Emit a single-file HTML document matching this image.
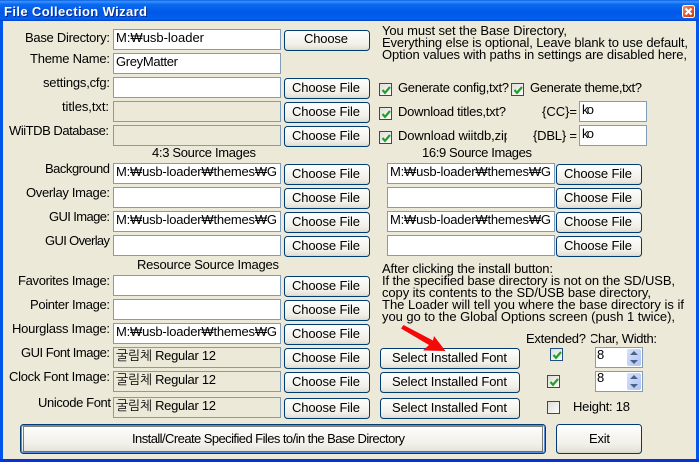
<!DOCTYPE html>
<html><head><meta charset="utf-8"><title>File Collection Wizard</title>
<style>
html,body{margin:0;padding:0;width:699px;height:462px;overflow:hidden;background:#ECE9D8}
svg{display:block}
text{font-family:"Liberation Sans","NanumGothic","Noto Sans CJK KR",sans-serif;font-size:13px;fill:#000;white-space:pre}
.i{fill:#fff;stroke:#7F9DB9}
.d{fill:#ECE9D8;stroke:#7F9DB9}
.c{fill:url(#cb);stroke:#1C5180}
.k{fill:none;stroke:#21A121;stroke-width:2.2}
.a{fill:#4D6185}
</style></head><body>
<svg width="699" height="462" viewBox="0 0 699 462" xmlns="http://www.w3.org/2000/svg">
<defs>
<linearGradient id="tb" x1="0" y1="0" x2="0" y2="1">
<stop offset="0" stop-color="#0A5FE0"/><stop offset=".08" stop-color="#3A93FF"/><stop offset=".2" stop-color="#0A6AF0"/><stop offset=".6" stop-color="#0058E8"/><stop offset=".9" stop-color="#0560EE"/><stop offset="1" stop-color="#0040C8"/>
</linearGradient>
<linearGradient id="bt" x1="0" y1="0" x2="0" y2="1">
<stop offset="0" stop-color="#FFFFFF"/><stop offset=".7" stop-color="#F0EFE8"/><stop offset=".9" stop-color="#E6E3D8"/><stop offset="1" stop-color="#D6D0C5"/>
</linearGradient>
<linearGradient id="cb" x1="0" y1="0" x2="1" y2="1">
<stop offset="0" stop-color="#DCDCD7"/><stop offset="1" stop-color="#FFFFFF"/>
</linearGradient>
<linearGradient id="sp" x1="0" y1="0" x2="1" y2="1">
<stop offset="0" stop-color="#D5E0FB"/><stop offset="1" stop-color="#AFC4F5"/>
</linearGradient>
<linearGradient id="cl" x1="0" y1="0" x2="1" y2="1">
<stop offset="0" stop-color="#F0A080"/><stop offset=".5" stop-color="#E2552A"/><stop offset="1" stop-color="#C83A10"/>
</linearGradient>
<rect id="cf" width="85" height="20" rx="3" fill="url(#bt)" stroke="#003C74"/>
<rect id="sf" width="139" height="20" rx="3" fill="url(#bt)" stroke="#003C74"/>
<clipPath id="c1"><rect x="390" y="125" width="117" height="22"/></clipPath>
<clipPath id="c2"><rect x="591" y="330" width="70" height="18"/></clipPath>
</defs>

<!-- window frame -->
<rect width="699" height="462" fill="#0055EA"/>
<rect x="3" y="21" width="693" height="438" fill="#ECE9D8"/>
<rect x="0" y="0" width="699" height="21" fill="url(#tb)"/>
<rect x="0" y="459" width="699" height="3" fill="#0831D9"/>
<text x="4" y="16" textLength="143" style="font-weight:bold;font-size:13px;fill:#0A2A8C" transform="translate(1,1)">File Collection Wizard</text>
<text x="4" y="16" textLength="143" style="font-weight:bold;font-size:13px;fill:#fff">File Collection Wizard</text>
<rect x="682.5" y="5.5" width="12" height="12" rx="2" fill="url(#cl)" stroke="#fff"/>
<path d="M685.5 8.5l6 6M691.5 8.5l-6 6" stroke="#fff" stroke-width="2.2" fill="none"/>

<!-- left labels -->
<text x="25" y="42" textLength="85">Base Directory:</text>
<text x="30" y="63" textLength="80">Theme Name:</text>
<text x="43" y="87" textLength="67">settings,cfg:</text>
<text x="62" y="111" textLength="47">titles,txt:</text>
<text x="9" y="135" textLength="100">WiiTDB Database:</text>
<text x="152" y="157" textLength="104">4:3 Source Images</text>
<text x="45" y="173" textLength="65">Background</text>
<text x="26" y="197" textLength="84">Overlay Image:</text>
<text x="49" y="221" textLength="61">GUI Image:</text>
<text x="45" y="245" textLength="65">GUI Overlay</text>
<text x="137" y="269" textLength="142">Resource Source Images</text>
<text x="18" y="285" textLength="92">Favorites Image:</text>
<text x="30" y="309" textLength="80">Pointer Image:</text>
<text x="12" y="333" textLength="98">Hourglass Image:</text>
<text x="21" y="357" textLength="89">GUI Font Image:</text>
<text x="9" y="381" textLength="101">Clock Font Image:</text>
<text x="38" y="407" textLength="73">Unicode Font</text>

<!-- left inputs -->
<rect class="i" x="113.500" y="29.500" width="167" height="20"/>
<rect class="i" x="113.500" y="53.500" width="167" height="20"/>
<rect class="i" x="113.500" y="77.500" width="167" height="20"/>
<rect class="d" x="113.500" y="101.500" width="167" height="20"/>
<rect class="d" x="113.500" y="125.500" width="167" height="20"/>
<rect class="i" x="113.500" y="163.500" width="167" height="20"/>
<rect class="i" x="113.500" y="187.500" width="167" height="20"/>
<rect class="i" x="113.500" y="211.500" width="167" height="20"/>
<rect class="i" x="113.500" y="235.500" width="167" height="20"/>
<rect class="i" x="113.500" y="275.500" width="167" height="20"/>
<rect class="i" x="113.500" y="299.500" width="167" height="20"/>
<rect class="i" x="113.500" y="323.500" width="167" height="20"/>
<rect class="d" x="113.500" y="347.500" width="167" height="20"/>
<rect class="d" x="113.500" y="371.500" width="167" height="20"/>
<rect class="d" x="113.500" y="397.500" width="167" height="20"/>

<text x="116" y="42" textLength="88">M:₩usb-loader</text>
<text x="116" y="66" textLength="62">GreyMatter</text>
<text x="116" y="176" textLength="161">M:₩usb-loader₩themes₩G</text>
<text x="116" y="224" textLength="161">M:₩usb-loader₩themes₩G</text>
<text x="116" y="336" textLength="161">M:₩usb-loader₩themes₩G</text>
<text x="116" y="360" textLength="100">굴림체 Regular 12</text>
<text x="116" y="384" textLength="100">굴림체 Regular 12</text>
<text x="116" y="410" textLength="100">굴림체 Regular 12</text>

<!-- left buttons -->
<use href="#cf" x="284.500" y="30.500"/>
<use href="#cf" x="284.500" y="78.500"/>
<use href="#cf" x="284.500" y="102.500"/>
<use href="#cf" x="284.500" y="126.500"/>
<use href="#cf" x="284.500" y="164.500"/>
<use href="#cf" x="284.500" y="188.500"/>
<use href="#cf" x="284.500" y="212.500"/>
<use href="#cf" x="284.500" y="236.500"/>
<use href="#cf" x="284.500" y="276.500"/>
<use href="#cf" x="284.500" y="300.500"/>
<use href="#cf" x="284.500" y="324.500"/>
<use href="#cf" x="284.500" y="348.500"/>
<use href="#cf" x="284.500" y="372.500"/>
<use href="#cf" x="284.500" y="398.500"/>
<text x="304" y="43" textLength="44">Choose</text>
<text x="292" y="92" textLength="68">Choose File</text>
<text x="292" y="116" textLength="68">Choose File</text>
<text x="292" y="140" textLength="68">Choose File</text>
<text x="292" y="178" textLength="68">Choose File</text>
<text x="292" y="202" textLength="68">Choose File</text>
<text x="292" y="226" textLength="68">Choose File</text>
<text x="292" y="250" textLength="68">Choose File</text>
<text x="292" y="290" textLength="68">Choose File</text>
<text x="292" y="314" textLength="68">Choose File</text>
<text x="292" y="338" textLength="68">Choose File</text>
<text x="292" y="362" textLength="68">Choose File</text>
<text x="292" y="386" textLength="68">Choose File</text>
<text x="292" y="412" textLength="68">Choose File</text>

<!-- right top text -->
<text x="382" y="35" textLength="185">You must set the Base Directory,</text>
<text x="382" y="47" textLength="306">Everything else is optional, Leave blank to use default,</text>
<text x="382" y="59" textLength="305">Option values with paths in settings are disabled here,</text>

<!-- checks -->
<rect class="c" x="379.500" y="83.500" width="12" height="12"/><path class="k" d="M382.500 90l2.500 2.800 5-5.800"/>
<rect class="c" x="511.500" y="83.500" width="12" height="12"/><path class="k" d="M514.500 90l2.500 2.800 5-5.800"/>
<rect class="c" x="379.500" y="107.500" width="12" height="12"/><path class="k" d="M382.500 114l2.500 2.800 5-5.800"/>
<rect class="c" x="379.500" y="131.500" width="12" height="12"/><path class="k" d="M382.500 138l2.500 2.800 5-5.800"/>
<text x="398" y="92" textLength="111">Generate config,txt?</text>
<text x="530" y="92" textLength="112">Generate theme,txt?</text>
<text x="398" y="116" textLength="108">Download titles,txt?</text>
<text x="398" y="140" textLength="113" clip-path="url(#c1)">Download wiitdb,zip</text>
<text x="542" y="116" textLength="35">{CC}=</text>
<text x="533" y="140" textLength="44">{DBL} =</text>
<rect class="i" x="579.500" y="101.500" width="67" height="20"/>
<rect class="i" x="579.500" y="125.500" width="67" height="20"/>
<text x="582" y="114" textLength="12">ko</text>
<text x="582" y="138" textLength="12">ko</text>
<text x="422" y="157" textLength="110">16:9 Source Images</text>

<!-- right images -->
<rect class="i" x="387.500" y="163.500" width="167" height="20"/>
<rect class="i" x="387.500" y="187.500" width="167" height="20"/>
<rect class="i" x="387.500" y="211.500" width="167" height="20"/>
<rect class="i" x="387.500" y="235.500" width="167" height="20"/>
<text x="390" y="176" textLength="161">M:₩usb-loader₩themes₩G</text>
<text x="390" y="224" textLength="161">M:₩usb-loader₩themes₩G</text>
<use href="#cf" x="556.500" y="164.500"/>
<use href="#cf" x="556.500" y="188.500"/>
<use href="#cf" x="556.500" y="212.500"/>
<use href="#cf" x="556.500" y="236.500"/>
<text x="564" y="178" textLength="68">Choose File</text>
<text x="564" y="202" textLength="68">Choose File</text>
<text x="564" y="226" textLength="68">Choose File</text>
<text x="564" y="250" textLength="68">Choose File</text>

<!-- notes -->
<text x="382" y="273" textLength="171">After clicking the install button:</text>
<text x="382" y="285" textLength="293">If the specified base directory is not on the SD/USB,</text>
<text x="382" y="297" textLength="269">copy its contents to the SD/USB base directory,</text>
<text x="382" y="309" textLength="302">The Loader will tell you where the base directory is if</text>
<text x="382" y="321" textLength="293">you go to the Global Options screen (push 1 twice),</text>

<!-- font section -->
<text x="526" y="343" textLength="60">Extended?</text>
<text x="589" y="343" textLength="68" clip-path="url(#c2)">Char, Width:</text>
<use href="#sf" x="380.500" y="348.500"/>
<use href="#sf" x="380.500" y="372.500"/>
<use href="#sf" x="380.500" y="398.500"/>
<text x="392" y="362" textLength="115">Select Installed Font</text>
<text x="392" y="386" textLength="115">Select Installed Font</text>
<text x="392" y="412" textLength="115">Select Installed Font</text>

<rect class="c" x="550.500" y="348.500" width="12" height="12"/><path class="k" d="M553.500 355l2.500 2.800 5-5.800"/>
<rect class="c" x="547.500" y="375.500" width="12" height="12"/><path class="k" d="M550.500 382l2.500 2.800 5-5.800"/>
<rect class="c" x="547.500" y="401.500" width="12" height="12"/>
<text x="573" y="411" textLength="57">Height: 18</text>

<rect class="i" x="595.500" y="347.500" width="47" height="20"/>
<rect class="i" x="595.500" y="371.500" width="47" height="20"/>
<text x="597" y="359" textLength="7">8</text>
<text x="597" y="382" textLength="7">8</text>
<rect x="627" y="349" width="14" height="17" rx="2" fill="url(#sp)"/>
<rect x="627" y="373" width="14" height="17" rx="2" fill="url(#sp)"/>
<path class="a" d="M634 351l4 4h-8zM630 360h8l-4 4zM634 375l4 4h-8zM630 384h8l-4 4z"/>

<!-- bottom buttons -->
<rect x="20.500" y="424.500" width="525" height="29" rx="3" fill="url(#bt)" stroke="#003C74"/>
<rect x="21.500" y="425.500" width="523" height="27" rx="2" fill="none" stroke="#5A8AD8"/>
<rect x="23.500" y="426.500" width="519" height="25" fill="none" stroke="#000" stroke-dasharray="1 1" shape-rendering="crispEdges"/>
<text x="132" y="443" textLength="273">Install/Create Specified Files to/in the Base Directory</text>
<rect x="556.500" y="424.500" width="85" height="29" rx="3" fill="url(#bt)" stroke="#003C74"/>
<text x="589" y="443" textLength="21">Exit</text>

<!-- red arrow -->
<path d="M403.500 325l29.500 15.500 1 -4.500 11.500 15 -22.500 -.5 6 -5.500 -28 -16.500z" fill="#F40808"/>
</svg>
</body></html>
